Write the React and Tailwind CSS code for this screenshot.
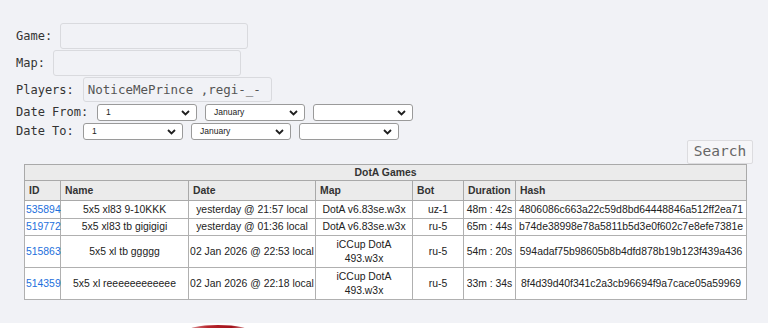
import { useState } from 'react'

const rows = [
  { id: '535894', name: '5x5 xl83 9-10KKK', date: 'yesterday @ 21:57 local', map: ['DotA v6.83se.w3x'], bot: 'uz-1', dur: '48m : 42s', hash: '4806086c663a22c59d8bd64448846a512ff2ea71', h: 'h-[18px]' },
  { id: '519772', name: '5x5 xl83 tb gigigigi', date: 'yesterday @ 01:36 local', map: ['DotA v6.83se.w3x'], bot: 'ru-5', dur: '65m : 44s', hash: 'b74de38998e78a5811b5d3e0f602c7e8efe7381e', h: 'h-[17px]' },
  { id: '515863', name: '5x5 xl tb ggggg', date: '02 Jan 2026 @ 22:53 local', map: ['iCCup DotA', '493.w3x'], bot: 'ru-5', dur: '54m : 20s', hash: '594adaf75b98605b8b4dfd878b19b123f439a436', h: 'h-[32px]' },
  { id: '514359', name: '5x5 xl reeeeeeeeeeee', date: '02 Jan 2026 @ 22:18 local', map: ['iCCup DotA', '493.w3x'], bot: 'ru-5', dur: '33m : 34s', hash: '8f4d39d40f341c2a3cb96694f9a7cace05a59969', h: 'h-[32px]' },
]

function Chevron() {
  return (
    <svg className="pointer-events-none absolute right-[7px] top-[6px]" width="9" height="6" viewBox="0 0 9 6">
      <path d="M1 1 L4.5 4.5 L8 1" fill="none" stroke="#1f1f1f" strokeWidth="1.8" />
    </svg>
  )
}

function Select({ value }) {
  return (
    <div className="relative w-[100px] h-[17px]">
      <div className="w-full h-full bg-white border border-[#9a9a9a] rounded-[3px] pl-[8px] text-[8.5px] leading-[15px] text-[#222] font-['Liberation_Sans',sans-serif]">
        {value}
      </div>
      <Chevron />
    </div>
  )
}

export default function App() {
  const [players, setPlayers] = useState('NoticeMePrince ,regi-_-')

  const label = "text-[12px] text-[#333] font-['DejaVu_Sans_Mono',monospace] whitespace-pre"
  const input = "h-[26px] w-[188px] bg-[#f1f2f6] border border-[#d9dade] rounded-[3px] px-[4px] text-[12.5px] text-[#555] font-['DejaVu_Sans_Mono',monospace] outline-none"

  return (
    <div className="min-h-[328px] bg-[#f1f2f6] flex flex-col">
      <div className="pt-[23px] pl-[16px] pr-[15px]">
        <div className="flex items-center gap-[8px]">
          <span className={label}>Game:</span>
          <input className={input} />
        </div>
        <div className="flex items-center gap-[8px] mt-[1px]">
          <span className={label}>Map:</span>
          <input className={input} />
        </div>
        <div className="flex items-center gap-[9px] mt-[1px]">
          <span className={label}>Players:</span>
          <input className={input + ' !h-[25px] !w-[189px]'} value={players} onChange={(e) => setPlayers(e.target.value)} />
        </div>
        <div className="flex items-center mt-[1px]">
          <span className={label + ' w-[81px]'}>Date From:</span>
          <div className="flex gap-[8px]">
            <Select value="1" />
            <Select value="January" />
            <Select value="" />
          </div>
        </div>
        <div className="flex items-center mt-[1px]">
          <span className={label + ' w-[67px]'}>Date To:</span>
          <div className="flex gap-[8px]">
            <Select value="1" />
            <Select value="January" />
            <Select value="" />
          </div>
        </div>
        <div className="flex justify-end">
          <button className="h-[24px] w-[66px] bg-[#f6f6f8] border border-[#dcdcdf] rounded-[2px] text-[14.5px] text-[#666] font-['DejaVu_Sans_Mono',monospace]">
            Search
          </button>
        </div>
      </div>

      <table className="ml-[24px] w-[722px] table-fixed border-collapse border border-[#9c9c9c] text-[10.4px] leading-[14px] text-[#222] font-['Liberation_Sans',Arial,sans-serif]">
        <colgroup>
          <col className="w-[36px]" />
          <col className="w-[128px]" />
          <col className="w-[127px]" />
          <col className="w-[97px]" />
          <col className="w-[51px]" />
          <col className="w-[52px]" />
          <col className="w-[231px]" />
        </colgroup>
        <thead>
          <tr className="h-[16px] bg-[#ebebeb]">
            <th colSpan={7} className="border border-[#a9a9a9] font-bold text-[#333] text-center">DotA Games</th>
          </tr>
          <tr className="h-[20px] bg-[#ebebeb]">
            {['ID', 'Name', 'Date', 'Map', 'Bot', 'Duration', 'Hash'].map((h) => (
              <th key={h} className="border border-[#a9a9a9] font-bold text-[#333] text-left px-[4px]">{h}</th>
            ))}
          </tr>
        </thead>
        <tbody>
          {rows.map((r) => (
            <tr key={r.id} className={r.h + ' bg-white'}>
              <td className="border border-[#b0b0b0] pl-[1px] text-left">
                <a className="text-[#1d6fdc]">{r.id}</a>
              </td>
              <td className="border border-[#b0b0b0] px-[2px] text-center whitespace-nowrap">{r.name}</td>
              <td className="border border-[#b0b0b0] px-[1px] text-center whitespace-nowrap">{r.date}</td>
              <td className="border border-[#b0b0b0] px-[2px] text-center">
                {r.map.map((m) => (
                  <div key={m}>{m}</div>
                ))}
              </td>
              <td className="border border-[#b0b0b0] px-[2px] text-center">{r.bot}</td>
              <td className="border border-[#b0b0b0] px-[1px] text-center whitespace-nowrap">{r.dur}</td>
              <td className="border border-[#b0b0b0] px-[2px] text-center whitespace-nowrap">{r.hash}</td>
            </tr>
          ))}
        </tbody>
      </table>

      <div className="mt-auto h-[5px] bg-white">
        <svg width="768" height="5" viewBox="0 0 768 5">
          <defs>
            <linearGradient id="redarc" x1="0" y1="0" x2="1" y2="0">
              <stop offset="0" stopColor="#e7b9bb" />
              <stop offset="0.35" stopColor="#b8262d" />
              <stop offset="0.7" stopColor="#a3121a" />
              <stop offset="1" stopColor="#e9c3c4" />
            </linearGradient>
          </defs>
          <ellipse cx="218" cy="10" rx="34" ry="8" fill="url(#redarc)" />
        </svg>
      </div>
    </div>
  )
}
